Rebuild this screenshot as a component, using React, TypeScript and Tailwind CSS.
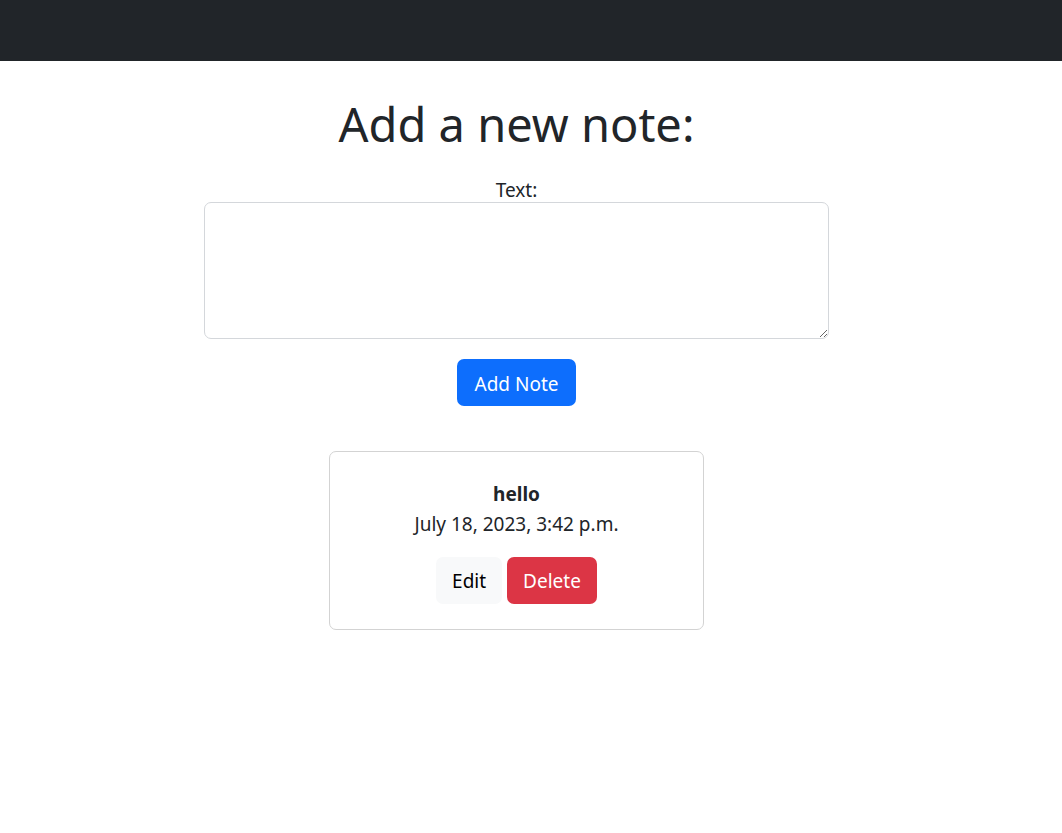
import React, { useState } from 'react';

function NoteCard() {
  return (
    <div className="w-[375px] border border-[#d3d3d3] rounded-[7px] pt-[28px] pb-[25px] flex flex-col items-center">
      <div className="text-[19px] leading-[28px] font-bold">hello</div>
      <div className="text-[19px] leading-[30px] pt-[1px]">July 18, 2023, 3:42 p.m.</div>
      <div className="mt-[18px] flex gap-[5px]">
        <button className="h-[47px] px-[16px] pt-[2px] text-[19px] rounded-[7px] bg-[#f8f9fa] text-black">Edit</button>
        <button className="h-[47px] px-[16px] pt-[2px] text-[19px] rounded-[7px] bg-[#dc3545] text-white">Delete</button>
      </div>
    </div>
  );
}

export default function App() {
  const [text, setText] = useState('');

  return (
    <div className="min-h-[833px] bg-white text-[#212529] font-['Noto_Sans',sans-serif]">
      <nav className="h-[61px] bg-[#212529]" />

      <main className="pr-[29px] flex flex-col items-center">
        {/* Form */}
        <h1 className="mt-[32px] h-[62px] leading-[62px] text-[47px] font-normal">Add a new note:</h1>
        <label htmlFor="note-text" className="mt-[23px] text-[19px] leading-[24px]">Text:</label>
        <textarea
          id="note-text"
          value={text}
          onChange={e => setText(e.target.value)}
          className="w-[625px] h-[137px] border border-[#d4d7db] rounded-[7px] px-3 py-2 text-[19px] outline-none"
        />
        <button className="mt-[20px] h-[47px] px-[18px] pt-[3px] text-[19px] rounded-[7px] bg-[#0d6efd] text-white">Add Note</button>

        {/* Notes */}
        <div className="mt-[45px]">
          <NoteCard />
        </div>
      </main>
    </div>
  );
}
